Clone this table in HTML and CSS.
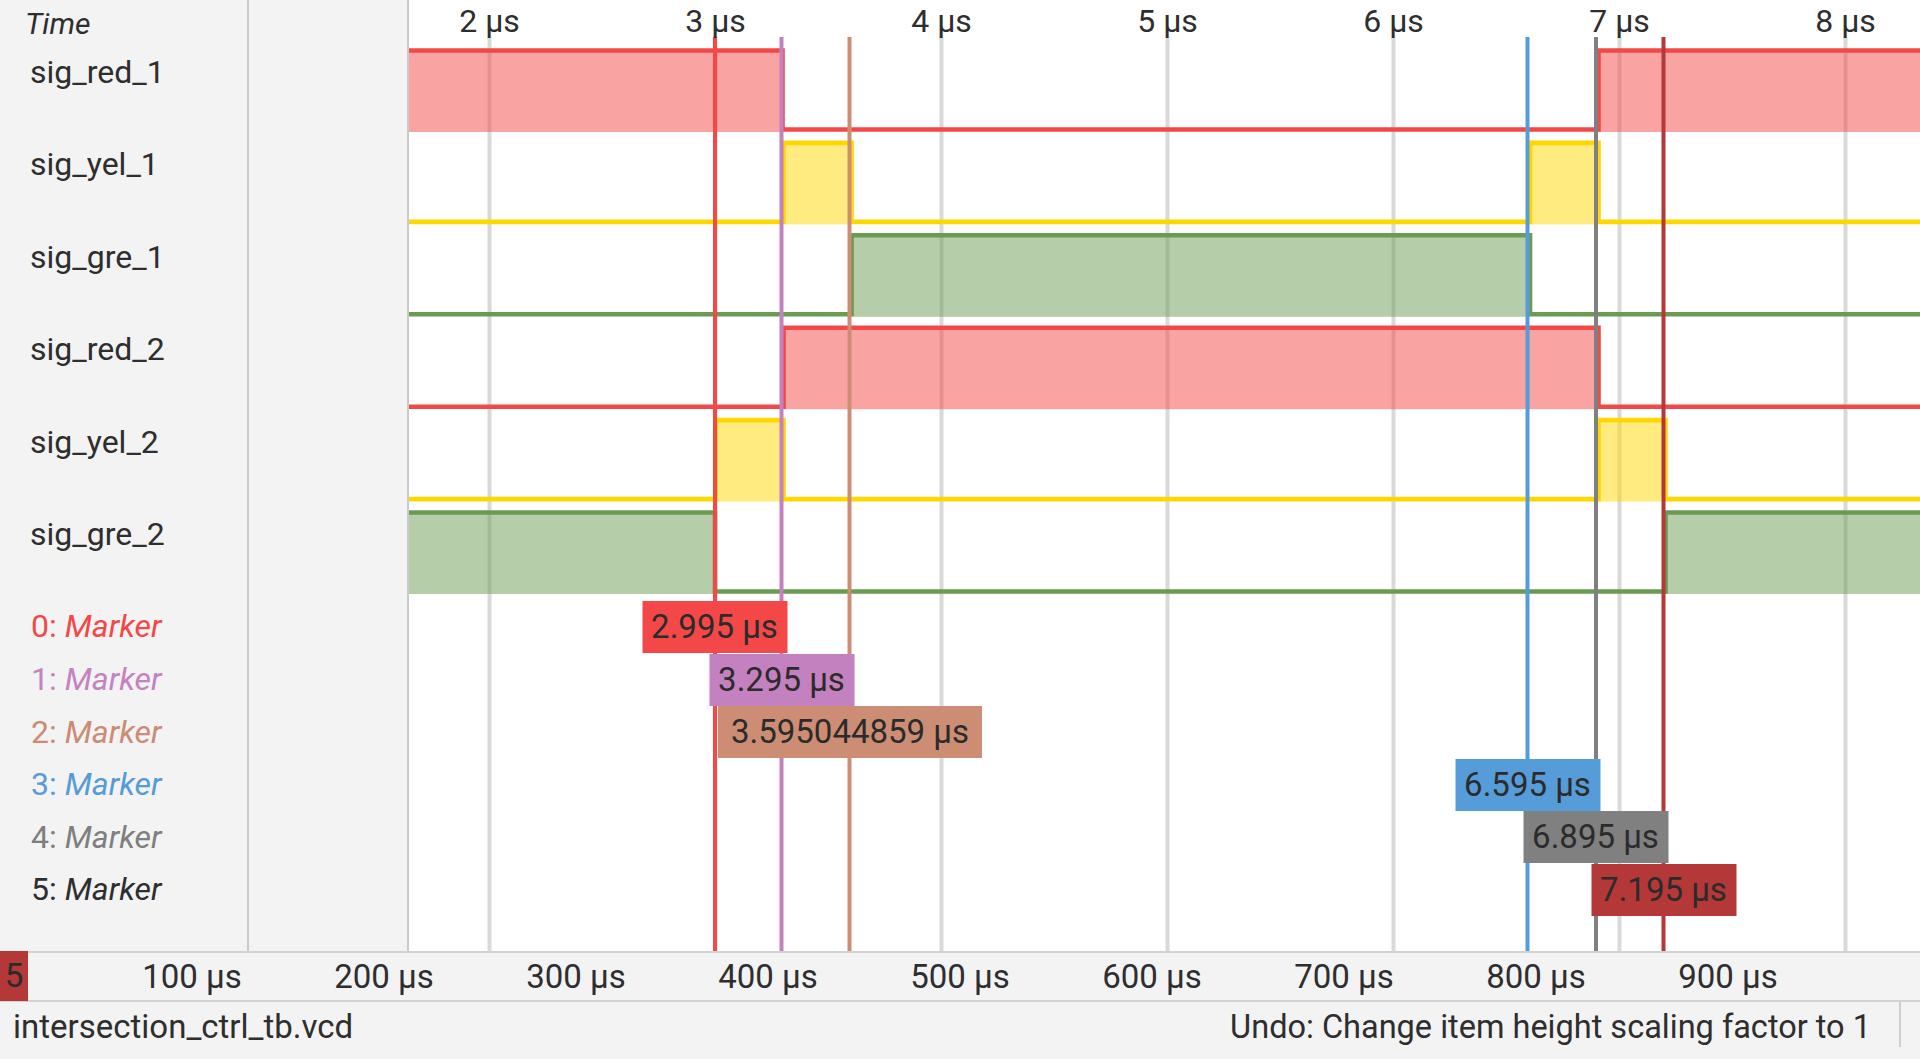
FILE: index.html
```html
<!DOCTYPE html>
<html>
<head>
<meta charset="utf-8">
<title>Surfer</title>
<link rel="stylesheet" href="styles.css">
</head>
<body>
<div class="app">
  <div class="main">
    <div class="names">
      <div class="hdr">Time</div>
      <div class="sig">sig_red_1</div>
      <div class="sig">sig_yel_1</div>
      <div class="sig">sig_gre_1</div>
      <div class="sig">sig_red_2</div>
      <div class="sig">sig_yel_2</div>
      <div class="sig">sig_gre_2</div>
      <div class="mk c0">0: <i>Marker</i></div>
      <div class="mk c1">1: <i>Marker</i></div>
      <div class="mk c2">2: <i>Marker</i></div>
      <div class="mk c3">3: <i>Marker</i></div>
      <div class="mk c4">4: <i>Marker</i></div>
      <div class="mk c5">5: <i>Marker</i></div>
    </div>
    <div class="values"></div>
    <div class="wave">
      <svg class="plot" width="1511" height="951" viewBox="409 0 1511 951" xmlns="http://www.w3.org/2000/svg">
        <g class="grid">
          <line x1="489.5" y1="37" x2="489.5" y2="951"/>
          <line x1="715.5" y1="37" x2="715.5" y2="951"/>
          <line x1="941.5" y1="37" x2="941.5" y2="951"/>
          <line x1="1167.5" y1="37" x2="1167.5" y2="951"/>
          <line x1="1393.5" y1="37" x2="1393.5" y2="951"/>
          <line x1="1619.5" y1="37" x2="1619.5" y2="951"/>
          <line x1="1845.5" y1="37" x2="1845.5" y2="951"/>
        </g>
        <g class="fill-red">
          <rect x="409" y="50.5" width="373.5" height="81.5"/>
          <rect x="1598.5" y="50.5" width="321.5" height="81.5"/>
          <rect x="783.5" y="327.7" width="815" height="81.5"/>
        </g>
        <g class="fill-yel">
          <rect x="783.5" y="142.9" width="68" height="81.5"/>
          <rect x="1530" y="142.9" width="68.5" height="81.5"/>
          <rect x="715.5" y="420.1" width="68" height="81.5"/>
          <rect x="1598.5" y="420.1" width="67" height="81.5"/>
        </g>
        <g class="fill-gre">
          <rect x="851.5" y="235.3" width="678.5" height="81.5"/>
          <rect x="409" y="512.5" width="304" height="81.5"/>
          <rect x="1665.5" y="512.5" width="254.5" height="81.5"/>
        </g>
        <path class="w-red" d="M409,50.5 H782.5 V129.5 H1598.5 V50.5 H1920"/>
        <path class="w-yel" d="M409,221.9 H783.5 V142.9 H851.5 V221.9 H1530 V142.9 H1598.5 V221.9 H1920"/>
        <path class="w-gre" d="M409,314.3 H851.5 V235.3 H1530 V314.3 H1920"/>
        <path class="w-red" d="M409,406.7 H783.5 V327.7 H1598.5 V406.7 H1920"/>
        <path class="w-yel" d="M409,499.1 H715.5 V420.1 H783.5 V499.1 H1598.5 V420.1 H1665.5 V499.1 H1920"/>
        <path class="w-gre" d="M409,512.5 H715 V591.5 H1665.5 V512.5 H1920"/>
        <g class="markers">
          <line class="m0" x1="715" y1="37" x2="715" y2="951"/>
          <line class="m1" x1="781.5" y1="37" x2="781.5" y2="951"/>
          <line class="m2" x1="849.5" y1="37" x2="849.5" y2="951"/>
          <line class="m3" x1="1527.5" y1="37" x2="1527.5" y2="951"/>
          <line class="m4" x1="1596" y1="37" x2="1596" y2="951"/>
          <line class="m5" x1="1663.5" y1="37" x2="1663.5" y2="951"/>
        </g>
      </svg>
      <div class="tlabel" style="left:80.5px">2 μs</div>
      <div class="tlabel" style="left:306.5px">3 μs</div>
      <div class="tlabel" style="left:532.5px">4 μs</div>
      <div class="tlabel" style="left:758.5px">5 μs</div>
      <div class="tlabel" style="left:984.5px">6 μs</div>
      <div class="tlabel" style="left:1210.5px">7 μs</div>
      <div class="tlabel" style="left:1436.5px">8 μs</div>

      <div class="mlabel b0" style="left:305.5px;top:601px">2.995 μs</div>
      <div class="mlabel b1" style="left:372.5px;top:653.6px">3.295 μs</div>
      <div class="mlabel b2 wide" style="left:441px;top:706.2px">3.595044859 μs</div>
      <div class="mlabel b3" style="left:1118.5px;top:758.8px">6.595 μs</div>
      <div class="mlabel b4" style="left:1186.5px;top:811.4px">6.895 μs</div>
      <div class="mlabel b5" style="left:1254.5px;top:864px">7.195 μs</div>
    </div>
  </div>
  <div class="timebar">
    <div class="cur5">5</div>
    <div class="blabel" style="left:192px">100 μs</div>
    <div class="blabel" style="left:384px">200 μs</div>
    <div class="blabel" style="left:576px">300 μs</div>
    <div class="blabel" style="left:768px">400 μs</div>
    <div class="blabel" style="left:960px">500 μs</div>
    <div class="blabel" style="left:1152px">600 μs</div>
    <div class="blabel" style="left:1344px">700 μs</div>
    <div class="blabel" style="left:1536px">800 μs</div>
    <div class="blabel" style="left:1728px">900 μs</div>
  </div>
  <div class="status">
    <div class="fn">intersection_ctrl_tb.vcd</div>
    <div class="undo">Undo: Change item height scaling factor to 1</div>
    <div class="sep"></div>
  </div>
</div>
</body>
</html>
```

FILE: styles.css
```css
html, body {
  margin: 0;
  padding: 0;
}
body {
  font-family: Roboto, "Liberation Sans", sans-serif;
  color: #2e2e2e;
  background: #f3f3f3;
}
.app {
  width: 1920px;
  height: 1059px;
  display: flex;
  flex-direction: column;
  background: #f3f3f3;
  overflow: hidden;
}
.main {
  display: flex;
  height: 951px;
  flex: none;
}
.names {
  width: 247px;
  flex: none;
  border-right: 2px solid #cacaca;
  display: flex;
  flex-direction: column;
}
.hdr {
  height: 46px;
  line-height: 48px;
  padding-left: 25px;
  font-size: 30px;
  font-style: italic;
  flex: none;
}
.sig {
  height: 92.4px;
  line-height: 52px;
  padding-left: 30px;
  font-size: 32px;
  flex: none;
}
.mk {
  height: 52.6px;
  line-height: 52.6px;
  padding-left: 31px;
  font-size: 32px;
  flex: none;
}
.mk i {
  font-style: italic;
}
.c0 { color: #f34848; }
.c1 { color: #c482c0; }
.c2 { color: #cc8b73; }
.c3 { color: #559bd8; }
.c4 { color: #7f7f7f; }
.c5 { color: #2e2e2e; }

.values {
  width: 158px;
  flex: none;
  border-right: 2px solid #cacaca;
}
.wave {
  flex: 1;
  position: relative;
  background: #ffffff;
  overflow: hidden;
}
.plot {
  display: block;
}
.grid line {
  stroke: #d9d9d9;
  stroke-width: 4;
}
.fill-red rect { fill: #f44848; fill-opacity: 0.5; }
.fill-yel rect { fill: #ffd700; fill-opacity: 0.5; }
.fill-gre rect { fill: #6b9b51; fill-opacity: 0.5; }
.w-red, .w-yel, .w-gre {
  fill: none;
  stroke-width: 4.6;
  stroke-linejoin: miter;
}
.w-red { stroke: #f44848; }
.w-yel { stroke: #ffd700; }
.w-gre { stroke: #6b9b51; }
.markers line { stroke-width: 4; }
.markers .m0 { stroke: #f44848; }
.markers .m1 { stroke: #c382bf; }
.markers .m2 { stroke: #cd8d74; }
.markers .m3 { stroke: #559cd9; }
.markers .m4 { stroke: #808080; }
.markers .m5 { stroke: #b43838; }

.tlabel {
  position: absolute;
  top: 0;
  height: 40px;
  line-height: 43px;
  font-size: 32px;
  white-space: nowrap;
  transform: translateX(-50%);
}
.mlabel {
  position: absolute;
  width: 145px;
  height: 52px;
  line-height: 52px;
  font-size: 33px;
  text-align: center;
  white-space: nowrap;
  color: #2b2b2b;
  transform: translateX(-50%);
}
.mlabel.wide { width: 264px; }
.b0 { background: #f44848; }
.b1 { background: #c382bf; }
.b2 { background: #cd8d74; }
.b3 { background: #559cd9; }
.b4 { background: #808080; }
.b5 { background: #b43838; }

.timebar {
  position: relative;
  flex: none;
  height: 47px;
  border-top: 2px solid #d2d2d2;
  border-bottom: 2px solid #d2d2d2;
  background: #f3f3f3;
}
.cur5 {
  position: absolute;
  left: 0;
  top: -2px;
  width: 28px;
  height: 50px;
  line-height: 50px;
  background: #b43838;
  font-size: 33px;
  text-align: center;
  color: #2b2b2b;
}
.blabel {
  position: absolute;
  top: 0;
  line-height: 47px;
  font-size: 33px;
  white-space: nowrap;
  transform: translateX(-50%);
}
.status {
  flex: none;
  height: 57px;
  display: flex;
  align-items: flex-start;
  line-height: 50px;
  font-size: 33px;
  padding: 0 19px 0 13px;
  white-space: nowrap;
}
.status .fn {
  flex: 1;
}
.status .undo {
  font-size: 32.5px;
}
.status .sep {
  width: 2px;
  height: 45px;
  background: #cfcfcf;
  margin-left: 28px;
}
```
